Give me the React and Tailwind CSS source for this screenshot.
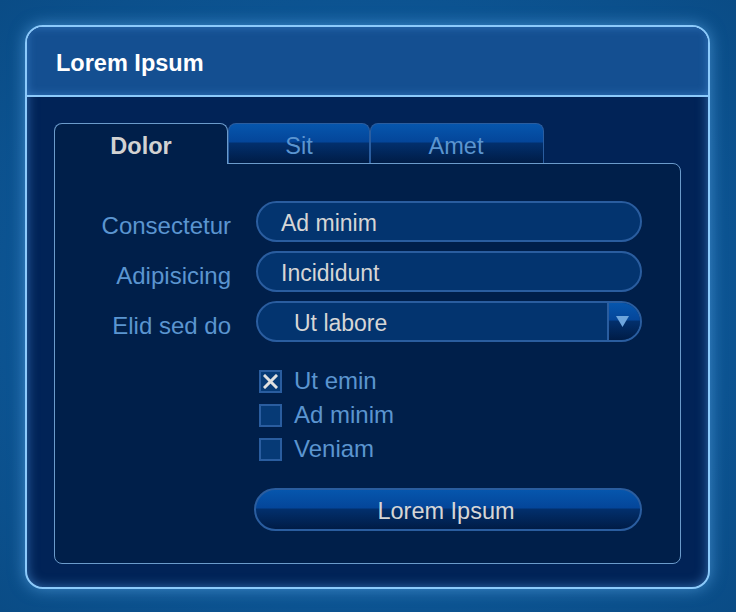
import React from 'react'

const tabGloss =
  'bg-[linear-gradient(to_bottom,#0656ad_0%,#04469a_45%,#022f6c_50%,#001c46_100%)]'

const Field = ({ label, children }) => (
  <div className="flex items-center h-[41px]">
    <div className="w-[176px] text-right text-[24px] text-[#5b95d0] leading-none pt-[8px]">{label}</div>
    <div className="ml-[25px] w-[386px] h-full">{children}</div>
  </div>
)

const TextBox = ({ value }) => (
  <div className="h-full rounded-full border-2 border-[#2a5d9f] bg-[#03346f] flex items-center pl-[23px] pt-[4px] text-[23px] text-[#d6d6d6]">
    {value}
  </div>
)

const Check = ({ label, checked }) => (
  <div className="flex items-center h-[22px]">
    <div className="w-[23px] h-[23px] border-2 border-[#2a5d9f] bg-[#063a76] flex items-center justify-center">
      {checked && (
        <svg width="15" height="15" viewBox="0 0 15 15">
          <path d="M2 2 L13 13 M13 2 L2 13" stroke="#e0e0e0" strokeWidth="3" strokeLinecap="square" />
        </svg>
      )}
    </div>
    <span className="ml-[12px] text-[24px] text-[#5b95d0] leading-none">{label}</span>
  </div>
)

export default function App() {
  return (
    <div
      className="w-[736px] h-[612px] pt-[25px] pl-[25px] bg-[radial-gradient(ellipse_at_50%_50%,#1466a8_0%,#0d5797_55%,#0a4c86_100%)]"
      style={{ fontFamily: '"Liberation Sans", Arial, sans-serif' }}
    >
      <div className="w-[685px] h-[564px] rounded-[18px] border-2 border-[#8ccafb] bg-[#012357] overflow-hidden shadow-[0_0_16px_rgba(110,185,250,0.55),inset_0_0_12px_rgba(90,165,240,0.55)]">
        {/* Header */}
        <div className="h-[70px] border-b-2 border-[#8ccafb] bg-[#144f91] flex items-center pl-[29px] shadow-[inset_0_0_10px_rgba(90,165,240,0.45)]">
          <span className="text-[23.5px] font-bold text-white leading-none pt-[6px]">Lorem Ipsum</span>
        </div>

        {/* Body */}
        <div className="pl-[27px] pt-[26px]">
          {/* Tabs */}
          <div className="flex h-[40px] relative z-10">
            <div className="w-[174px] h-[41px] rounded-t-[8px] border border-b-0 border-[#6b9bcb] bg-[#001f4a] flex items-center justify-center pt-[6px] text-[23.5px] font-bold text-[#d2d2d2] leading-none">
              Dolor
            </div>
            <div className={`w-[142px] h-[40px] rounded-t-[8px] border border-b-0 border-[#2a5d9f] ${tabGloss} flex items-center justify-center pt-[6px] text-[23.5px] text-[#5b95d0] leading-none`}>
              Sit
            </div>
            <div className={`w-[174px] h-[40px] rounded-t-[8px] border border-b-0 border-[#2a5d9f] ${tabGloss} flex items-center justify-center pt-[6px] pr-[2px] text-[23.5px] text-[#5b95d0] leading-none`}>
              Amet
            </div>
          </div>

          {/* Panel */}
          <div className="w-[627px] h-[401px] rounded-b-[8px] rounded-tr-[8px] border border-[#6b9bcb] bg-[#001f4a] pt-[37px]">
            <div className="flex flex-col gap-[9px]">
              <Field label="Consectetur">
                <TextBox value="Ad minim" />
              </Field>
              <Field label="Adipisicing">
                <TextBox value="Incididunt" />
              </Field>
              <Field label="Elid sed do">
                <div className="h-full rounded-full border-2 border-[#2a5d9f] bg-[#03346f] flex overflow-hidden">
                  <div className="flex-1 flex items-center pl-[36px] pt-[4px] text-[23px] text-[#d6d6d6]">Ut labore</div>
                  <div className={`w-[33px] h-full border-l-2 border-[#2a5d9f] ${tabGloss} flex items-center justify-center pr-[4px]`}>
                    <svg width="13" height="11" viewBox="0 0 13 11">
                      <path d="M0 0 H13 L6.5 11 Z" fill="#6ea5dc" />
                    </svg>
                  </div>
                </div>
              </Field>
            </div>

            <div className="ml-[204px] mt-[28px] flex flex-col gap-[12px]">
              <Check label="Ut emin" checked />
              <Check label="Ad minim" />
              <Check label="Veniam" />
            </div>

            <div className="ml-[199px] mt-[28px] w-[388px] h-[43px] rounded-full border-2 border-[#2a5d9f] bg-[linear-gradient(to_bottom,#0656ad_0%,#04469a_45%,#022f6c_50%,#001c46_100%)] flex items-center justify-center pt-[4px] pr-[4px] text-[23.5px] text-[#d6d6d6] leading-none">
              Lorem Ipsum
            </div>
          </div>
        </div>
      </div>
    </div>
  )
}
